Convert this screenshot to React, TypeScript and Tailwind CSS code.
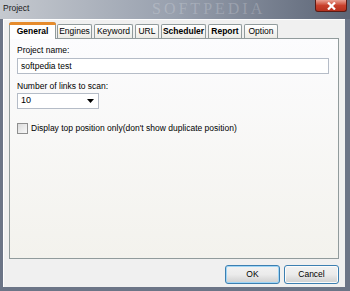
import React from "react";

const font = { fontFamily: '"Liberation Sans", Arial, sans-serif' };

function Tab({ label, width, bold, active }: { label: string; width: number; bold?: boolean; active?: boolean }) {
  if (active) {
    return (
      <div
        className="relative z-10 -mb-px flex h-[17px] items-center justify-center rounded-t-[3px] border border-b-0 border-[#919b9c] bg-white text-[8.5px] font-bold text-black"
        style={{ width }}
      >
        <div className="absolute left-[-1px] right-[-1px] top-[-1px] h-[3px] rounded-t-[3px] bg-[#e68b2c]" />
        <span className="mt-[1px]">{label}</span>
      </div>
    );
  }
  return (
    <div
      className={`flex h-[14px] items-center justify-center rounded-t-[2px] border border-b-0 border-[#919b9c] bg-gradient-to-b from-[#ffffff] to-[#ecebe6] text-[8.5px] text-black ${bold ? "font-bold" : ""}`}
      style={{ width }}
    >
      {label}
    </div>
  );
}

export default function App() {
  return (
    <div className="relative flex h-[291px] w-[350px] flex-col overflow-hidden bg-[#6c7587]" style={font}>
      {/* title bar */}
      <div className="relative flex h-[19px] items-start bg-gradient-to-r from-[#c5c9cf] via-[#98a0ae] to-[#5c6576]">
        <span className="ml-[3px] mt-[3px] text-[8.5px] leading-[10px] text-[#1a1a1a]">Project</span>
        <span
          className="absolute left-[152px] top-[1px] text-[16px] leading-[16px] tracking-[3px] text-white/20"
          style={{ fontFamily: '"Liberation Serif", serif' }}
        >
          SOFTPEDIA
        </span>
        <div className="absolute right-[3px] top-0 flex h-[12px] w-[32px] items-center justify-center rounded-b-[3px] border border-t-0 border-[#5a1a14] bg-gradient-to-b from-[#e8a093] via-[#c8402c] to-[#b5311e]">
          <svg width="9" height="8" viewBox="0 0 9 8">
            <path d="M1 0.5 L8 7.5 M8 0.5 L1 7.5" stroke="#ffffff" strokeWidth="2.2" />
          </svg>
        </div>
      </div>

      {/* body with frame */}
      <div className="flex flex-1 pl-[3px] pr-[5px] pb-[4px]">
        <div className="flex flex-1 flex-col border-l border-t border-white bg-[#f0f0f0]">
          {/* tabs */}
          <div className="relative ml-[5px] mt-[2px] flex items-end">
            <Tab label="General" width={47} active />
            <div className="ml-[1px]" />
            <Tab label="Engines" width={35} />
            <div className="ml-[2px]" />
            <Tab label="Keyword" width={39} />
            <div className="ml-[2px]" />
            <Tab label="URL" width={24} />
            <div className="ml-[2px]" />
            <Tab label="Scheduler" width={45} bold />
            <div className="ml-[2px]" />
            <Tab label="Report" width={34} bold />
            <div className="ml-[2px]" />
            <Tab label="Option" width={34} />
          </div>
          {/* panel */}
          <div className="ml-[5px] mr-[6px] flex h-[221px] flex-col border border-[#919b9c] bg-gradient-to-b from-[#fcfcfe] to-[#f3f2ed] pl-[7px] pr-[9px] pt-[6px] text-[8.5px] text-black">
            <div className="leading-[11px]">Project name:</div>
            <div className="mt-[2px] flex h-[16px] items-center border border-[#b5bcc7] bg-white pl-[3px]">softpedia test</div>
            <div className="mt-[7px] leading-[11px]">Number of links to scan:</div>
            <div className="mt-[1px] flex h-[16px] w-[82px] items-center justify-between border border-[#b5bcc7] bg-white pl-[3px] pr-[4px]">
              <span className="text-[9px]">10</span>
              <svg width="7" height="4" viewBox="0 0 7 4">
                <path d="M0 0 L7 0 L3.5 4 Z" fill="#000" />
              </svg>
            </div>
            <div className="mt-[13px] flex items-center">
              <div className="h-[11px] w-[11px] border border-[#8f8f8f] bg-gradient-to-br from-[#dcdcdc] to-[#f8f8f8]" />
              <span className="ml-[3px]">Display top position only(don't show duplicate position)</span>
            </div>
          </div>
          {/* buttons */}
          <div className="mr-[6px] mt-[6px] flex justify-end gap-[4px] text-[8.5px] text-black">
            <button className="h-[19px] w-[55px] rounded-[3px] border border-[#3c7fb1] bg-gradient-to-b from-[#f2f2f2] via-[#ebebeb] to-[#cfcfcf] shadow-[inset_0_0_0_1px_#9fd5f6]">OK</button>
            <button className="h-[19px] w-[55px] rounded-[3px] border border-[#3c7fb1] bg-gradient-to-b from-[#f2f2f2] via-[#ebebeb] to-[#cfcfcf] shadow-[inset_0_0_0_1px_#fbfbfb]">Cancel</button>
          </div>
        </div>
      </div>
    </div>
  );
}
